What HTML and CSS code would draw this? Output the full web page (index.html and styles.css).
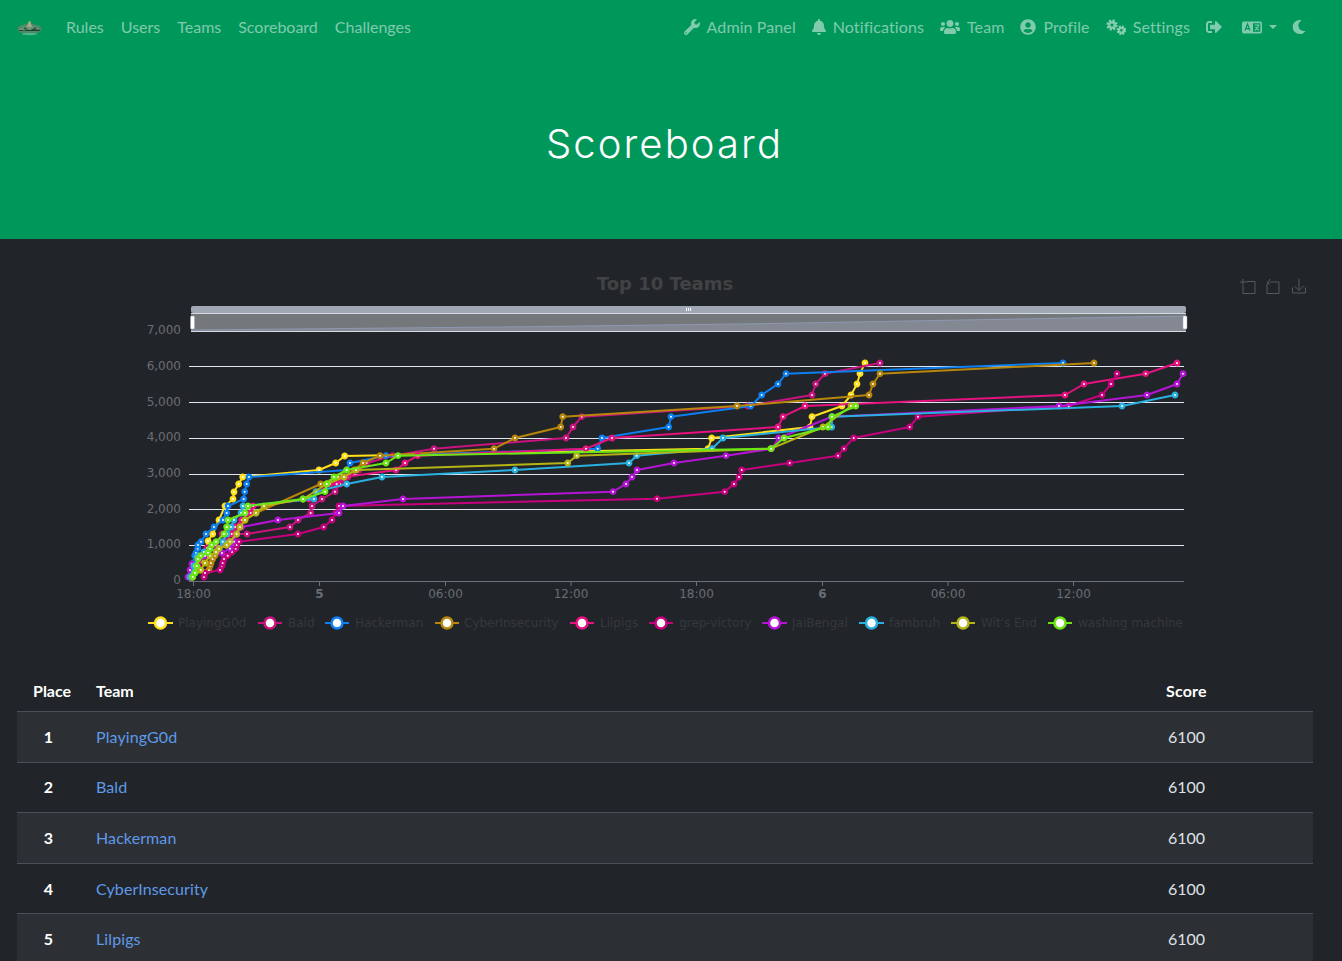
FILE: index.html
```html
<!DOCTYPE html>
<html lang="en">
<head>
<meta charset="utf-8">
<title>Scoreboard</title>
<link rel="stylesheet" href="styles.css">
</head>
<body>
<nav class="navbar">
  <a class="brand" href="#"><svg class="logo" viewBox="0 0 26 16"><ellipse cx="13" cy="9" rx="12.500" ry="5.500" fill="#4d8a68"/><path d="M2 9l6-2.500 5-2 5 2 6 2.500-2 2H4z" fill="#6d9577"/><path d="M2 10.500c3-1.500 5 1 7-.5s4 1 6-.5 5 1 9 0v1.500H2z" fill="#1f4434"/><path d="M12 1h2l1.500 6h-5z" fill="#a9a884"/><path d="M7 7.500h3v2H7zM17 7.500h3v2h-3z" fill="#2c5a45"/><ellipse cx="13" cy="14.300" rx="8" ry="1.200" fill="#4bb98b"/></svg></a>
  <ul class="nav-list">
    <li><a href="#">Rules</a></li>
    <li><a href="#">Users</a></li>
    <li><a href="#">Teams</a></li>
    <li><a href="#">Scoreboard</a></li>
    <li><a href="#">Challenges</a></li>
  </ul>
  <ul class="nav-list nav-right">
    <li><a href="#"><svg class="ico w16" viewBox="0 0 512 512"><path d="M507.73 109.1c-2.24-9.03-13.54-12.09-20.12-5.51l-74.36 74.36-67.88-11.31-11.31-67.88 74.36-74.36c6.62-6.62 3.43-17.9-5.66-20.16-47.38-11.74-99.55.91-136.58 37.93-39.64 39.64-50.55 97.1-34.05 147.2L18.74 402.76c-24.99 24.99-24.99 65.51 0 90.5 24.99 24.99 65.51 24.99 90.5 0l213.21-213.21c50.12 16.71 107.47 5.68 147.37-34.22 37.07-37.07 49.7-89.32 37.91-136.73zM64 472c-13.25 0-24-10.75-24-24 0-13.26 10.75-24 24-24s24 10.74 24 24c0 13.25-10.75 24-24 24z"/></svg>Admin Panel</a></li>
    <li><a href="#"><svg class="ico w14" viewBox="0 0 448 512"><path d="M224 512c35.32 0 63.97-28.65 63.97-64H160.03c0 35.35 28.65 64 63.97 64zm215.39-149.71c-19.32-20.76-55.47-51.99-55.47-154.29 0-77.7-54.48-139.9-127.94-155.16V32c0-17.67-14.32-32-31.98-32s-31.98 14.33-31.98 32v20.84C118.56 68.1 64.08 130.3 64.08 208c0 102.3-36.15 133.53-55.47 154.29-6 6.45-8.66 14.16-8.61 21.71.11 16.4 12.98 32 32.1 32h383.8c19.12 0 32-15.6 32.1-32 .05-7.55-2.61-15.27-8.61-21.71z"/></svg>Notifications</a></li>
    <li><a href="#"><svg class="ico w20" viewBox="0 0 640 512"><path d="M96 224c35.3 0 64-28.7 64-64s-28.7-64-64-64-64 28.7-64 64 28.7 64 64 64zm448 0c35.3 0 64-28.7 64-64s-28.7-64-64-64-64 28.7-64 64 28.7 64 64 64zm32 32h-64c-17.6 0-33.5 7.1-45.1 18.6 40.3 22.1 68.9 62 75.1 109.4h66c17.7 0 32-14.3 32-32v-32c0-35.3-28.7-64-64-64zm-256 0c61.9 0 112-50.1 112-112S381.9 32 320 32 208 82.1 208 144s50.1 112 112 112zm76.8 32h-8.3c-20.8 10-43.9 16-68.5 16s-47.6-6-68.5-16h-8.3C179.6 288 128 339.6 128 403.2V432c0 26.5 21.5 48 48 48h288c26.5 0 48-21.5 48-48v-28.8c0-63.6-51.6-115.2-115.2-115.2zm-223.7-13.4C161.5 263.1 145.6 256 128 256H64c-35.3 0-64 28.7-64 64v32c0 17.7 14.3 32 32 32h65.9c6.3-47.4 34.9-87.3 75.2-109.4z"/></svg>Team</a></li>
    <li><a href="#"><svg class="ico w16" viewBox="0 0 496 512"><path d="M248 8C111 8 0 119 0 256s111 248 248 248 248-111 248-248S385 8 248 8zm0 96c48.6 0 88 39.4 88 88s-39.4 88-88 88-88-39.4-88-88 39.4-88 88-88zm0 344c-58.7 0-111.3-26.6-146.5-68.2 18.8-35.4 55.6-59.8 98.5-59.8 2.4 0 4.8.4 7.1 1.1 13 4.2 26.6 6.9 40.9 6.9 14.3 0 28-2.7 40.9-6.9 2.3-.7 4.7-1.1 7.1-1.1 42.9 0 79.7 24.4 98.5 59.8C359.3 421.4 306.7 448 248 448z"/></svg>Profile</a></li>
    <li><a href="#"><svg class="ico w20" viewBox="0 0 20 16"><g class="gear"><circle cx="6" cy="6" r="2.8" stroke-width="2.4"/><circle cx="6" cy="6" r="4.7" stroke-width="2" stroke-dasharray="2.1 1.6"/><circle cx="15.4" cy="11.3" r="2.4" stroke-width="2.2"/><circle cx="15.4" cy="11.3" r="4" stroke-width="1.8" stroke-dasharray="1.9 1.25"/></g></svg>Settings</a></li>
    <li><a href="#"><svg class="ico w16 solo" viewBox="0 0 512 512"><path d="M497 273L329 441c-15 15-41 4.5-41-17v-96H152c-13.3 0-24-10.7-24-24v-96c0-13.3 10.7-24 24-24h136V88c0-21.4 25.9-32 41-17l168 168c9.3 9.4 9.3 24.6 0 34zM192 436v-40c0-6.6-5.4-12-12-12H96c-17.7 0-32-14.3-32-32V160c0-17.7 14.3-32 32-32h84c6.6 0 12-5.4 12-12V76c0-6.6-5.4-12-12-12H96c-53 0-96 43-96 96v192c0 53 43 96 96 96h84c6.6 0 12-5.4 12-12z"/></svg></a></li>
    <li class="lang"><a href="#"><svg class="ico w20 solo" viewBox="0 0 20 16"><path fill-rule="evenodd" d="M2 2.500h16a2 2 0 0 1 2 2v8a2 2 0 0 1-2 2H2a2 2 0 0 1-2-2v-8a2 2 0 0 1 2-2zM11 4.200v8.600h7.400V4.200z"/><path class="cut" d="M3 11.500l2.500-6.500 2.500 6.500M3.900 9.600h3.200"/><path class="glyph" d="M12.800 6h4.400M16.600 6c-.4 2.400-2 4.300-3.800 5.200M13.600 8c.7 1.400 2 2.600 3.600 3.200"/></svg><span class="caret"></span></a></li>
    <li><a href="#"><svg class="ico w14 solo" viewBox="0 0 512 512"><path d="M283.211 512c78.962 0 151.079-35.925 198.857-94.792 7.068-8.708-.639-21.43-11.562-19.35-124.203 23.654-238.262-71.576-238.262-196.954 0-72.222 38.662-138.635 101.498-174.394 9.686-5.512 7.25-20.197-3.756-22.23A258.156 258.156 0 0 0 283.211 0c-141.309 0-256 114.511-256 256 0 141.309 114.511 256 256 256z"/></svg></a></li>
  </ul>
</nav>
<header class="hero"><h1>Scoreboard</h1></header>
<main>
<svg class="chart" viewBox="0 239 1342 428" role="img">
  <defs>
    <marker id="m1" class="mk" markerWidth="8" markerHeight="8" refX="4" refY="4" markerUnits="userSpaceOnUse"><circle class="d1" cx="4" cy="4" r="2.2"/></marker>
    <marker id="m2" class="mk" markerWidth="8" markerHeight="8" refX="4" refY="4" markerUnits="userSpaceOnUse"><circle class="d2" cx="4" cy="4" r="2.2"/></marker>
    <marker id="m3" class="mk" markerWidth="8" markerHeight="8" refX="4" refY="4" markerUnits="userSpaceOnUse"><circle class="d3" cx="4" cy="4" r="2.2"/></marker>
    <marker id="m4" class="mk" markerWidth="8" markerHeight="8" refX="4" refY="4" markerUnits="userSpaceOnUse"><circle class="d4" cx="4" cy="4" r="2.2"/></marker>
    <marker id="m5" class="mk" markerWidth="8" markerHeight="8" refX="4" refY="4" markerUnits="userSpaceOnUse"><circle class="d5" cx="4" cy="4" r="2.2"/></marker>
    <marker id="m6" class="mk" markerWidth="8" markerHeight="8" refX="4" refY="4" markerUnits="userSpaceOnUse"><circle class="d6" cx="4" cy="4" r="2.2"/></marker>
    <marker id="m7" class="mk" markerWidth="8" markerHeight="8" refX="4" refY="4" markerUnits="userSpaceOnUse"><circle class="d7" cx="4" cy="4" r="2.2"/></marker>
    <marker id="m8" class="mk" markerWidth="8" markerHeight="8" refX="4" refY="4" markerUnits="userSpaceOnUse"><circle class="d8" cx="4" cy="4" r="2.2"/></marker>
    <marker id="m9" class="mk" markerWidth="8" markerHeight="8" refX="4" refY="4" markerUnits="userSpaceOnUse"><circle class="d9" cx="4" cy="4" r="2.2"/></marker>
    <marker id="m10" class="mk" markerWidth="8" markerHeight="8" refX="4" refY="4" markerUnits="userSpaceOnUse"><circle class="d10" cx="4" cy="4" r="2.2"/></marker>
  </defs>

  <text class="title" x="665" y="290" text-anchor="middle">Top 10 Teams</text>

  <g class="toolbox">
    <path d="M1243 285.500v8h12v-12h-8M1240 282h7M1243 279v6"/>
    <path d="M1270 282h9v11.500h-12v-9.500M1267 284.500l3-5.500M1267 282l3 2.500"/>
    <path d="M1292.500 287.500v5.500h13v-5.500M1299 278.500v12M1294.500 286l4.500 4.500 4.500-4.500"/>
  </g>

  <g class="grid">
    <path d="M189 366.500H1184M189 402.500H1184M189 438.500H1184M189 474.500H1184M189 509.500H1184M189 545.500H1184"/>
  </g>
  <path class="axis" d="M189 581.500H1184M193.500 581v5M319.500 581v5M445.500 581v5M571 581v5M696.500 581v5M822.500 581v5M948 581v5M1073.500 581v5"/>

  <g class="ylab" text-anchor="end">
    <text x="181" y="334">7,000</text>
    <text x="181" y="370">6,000</text>
    <text x="181" y="406">5,000</text>
    <text x="181" y="441">4,000</text>
    <text x="181" y="477">3,000</text>
    <text x="181" y="513">2,000</text>
    <text x="181" y="548">1,000</text>
    <text x="181" y="584">0</text>
  </g>
  <g class="xlab" text-anchor="middle">
    <text x="193.500" y="598">18:00</text>
    <text class="bold" x="319.500" y="598">5</text>
    <text x="445.500" y="598">06:00</text>
    <text x="571" y="598">12:00</text>
    <text x="696.500" y="598">18:00</text>
    <text class="bold" x="822.500" y="598">6</text>
    <text x="948" y="598">06:00</text>
    <text x="1073.500" y="598">12:00</text>
  </g>

  <g class="series">
    <polyline class="s1" points="192,577 196,570 200,560 205,552 208,541 212.700,534 219,520 225,506 233,499 234,492 238.700,484 242.700,477 319,470 335.700,463 344.700,456 708,448.700 711.700,438 810,427 812,416.700 842,406 851,395 857,384 860,373.700 865,363"/>
    <polyline class="s2" points="190,577 193,565 198,556 207,548 216,545 222,534 247,534 290,527 298,520 310.700,513 312,506 322,499 335,491.700 340,484 348,477 359,470 366.700,463 393,455.700 434,448.700 566,438 573,427 581.700,416.700 747.700,406 812,395 815.700,384 825,373.700 880,363"/>
    <polyline class="s3" points="192,577 193.300,563 194.700,555.700 196,553 197.700,548.700 198,545 201,541.700 206,534 214,527 223,520 226.700,513 228,506 243.700,499 244.700,491.700 246.700,484 249,477 346.700,470 350,463 386,455.700 597.700,448.700 602,438 668.700,427 671,416.700 750.700,406 761.700,395 778,384 786,373.700 1063,363"/>
    <polyline class="s4" points="190,577 200,570 209,570 210,566 211,563 212.700,559 215,555.700 219,548.700 226,545 230,541.700 236.700,534 240,527 245,520 256,513 320.700,484 338,477 344,477 354,470 363,463 380,455.700 494,448.700 515,438 560.700,427 562.700,416.700 737,406 869,395 873,384 880,373.700 1094,363"/>
    <polyline class="s5" points="192,577 198,566 206,552 218,548.700 226,541.700 231.700,534 235,527 241.700,520 250.700,513 253,506 309,499 330,484 336.700,484 344.700,477 396,470 405,463 417.700,455.700 586,448.700 612,438 778,427 783,416.700 805,406 1065,395 1084,384 1145.700,373.700 1177,363"/>
    <polyline class="s6" points="204,577 205,573 220,570 222,566 222.700,563 224,559 227.700,555.700 232,552 235.700,548.700 236.700,545 239,541.700 298,534 323.700,527 332,520 336,513 339,506 657,498.700 724.700,491.700 734,484 739,477 741.700,470 789.700,463 838,455.700 844,448.700 853.700,438 909.700,427 918,416.700 1068.700,406 1102,395 1111,384 1117,373.700"/>
    <polyline class="s7" points="188,577 190,570 192,564 205,556 222,553 230,548.700 234,541.700 237,534 241.700,527 278,520 339,513 343,506 403,499 613,491.700 626,484 632,477 637,470 674,463 726,455.700 771.700,448.700 778.700,438 832,416.700 1059,406 1147,395 1177,384 1183,373.700"/>
    <polyline class="s8" points="190,577 194,566 198,556 204,552 219,548.700 222.700,541.700 227,534 231,527 234,520 241,513 243,506 314,499 316,491.700 346.700,484 382,477 515,470 629,463 636.700,455.700 712,448.700 723,438 831.700,427 832,416.700 1122,406 1175,395"/>
    <polyline class="s9" points="192.700,577 200.700,570 205,563 210,555.700 216,552 219,548.700 226.700,545 230,541.700 236.700,534 240,527 245,520 256,513 264,506 303,499 326.700,484 344,477 356,470 567.700,463 576.700,455.700 771,448.700 823,427 851,406"/>
    <polyline class="s10" points="192.700,577 195,573 196.700,566 198,559 200.700,555.700 208,552.700 210,548.700 211.700,545 216,541.700 224,534 226.700,527 228,520 245,513 248,506 303,499 325,491.700 326.700,484 334,477 346.700,470 386,463 398,455.700 771,448.700 784,438 828,427 832,416.700 855.700,406"/>
  </g>

  <g class="zoom">
    <rect class="z-band" x="191" y="306" width="995" height="7" rx="2"/>
    <rect class="z-fill" x="191" y="313" width="995" height="18"/>
    <path class="z-shadow" d="M191 331V330L530 326.700L760 323.700L1186 316V331Z"/>
    <path class="z-line" d="M191 330L530 326.700L760 323.700L1186 316"/>
    <path class="z-border" d="M191 313.500H1186M191 331.500H1186"/>
    <path class="z-grip" d="M686.500 308v3M688.500 308v3M690.500 308v3"/>
    <rect class="z-handle" x="190.500" y="316" width="4" height="13" rx="1"/>
    <rect class="z-handle" x="1183" y="316" width="4" height="13" rx="1"/>
  </g>

  <g class="legend">
    <path class="s1 lg" d="M148 623h25"/><circle class="lc s1" cx="160.500" cy="623" r="5.500"/><text x="178" y="627">PlayingG0d</text>
    <path class="s2 lg" d="M258 623h24"/><circle class="lc s2" cx="270" cy="623" r="5.500"/><text x="288" y="627">Bald</text>
    <path class="s3 lg" d="M325 623h24"/><circle class="lc s3" cx="337" cy="623" r="5.500"/><text x="355" y="627">Hackerman</text>
    <path class="s4 lg" d="M435 623h24"/><circle class="lc s4" cx="447" cy="623" r="5.500"/><text x="464" y="627">CyberInsecurity</text>
    <path class="s5 lg" d="M570 623h24"/><circle class="lc s5" cx="582" cy="623" r="5.500"/><text x="600" y="627">Lilpigs</text>
    <path class="s6 lg" d="M649 623h24"/><circle class="lc s6" cx="661" cy="623" r="5.500"/><text x="679" y="627">grep-victory</text>
    <path class="s7 lg" d="M762 623h25"/><circle class="lc s7" cx="774.500" cy="623" r="5.500"/><text x="792" y="627">JaiBengal</text>
    <path class="s8 lg" d="M859 623h25"/><circle class="lc s8" cx="871.500" cy="623" r="5.500"/><text x="889" y="627">fambruh</text>
    <path class="s9 lg" d="M951 623h24"/><circle class="lc s9" cx="963" cy="623" r="5.500"/><text x="981" y="627">Wit's End</text>
    <path class="s10 lg" d="M1048 623h24"/><circle class="lc s10" cx="1060" cy="623" r="5.500"/><text x="1078" y="627">washing machine</text>
  </g>
</svg>

<table class="board">
  <thead>
    <tr><th class="c-place">Place</th><th class="c-team">Team</th><th class="c-score">Score</th></tr>
  </thead>
  <tbody>
    <tr><th class="r-place">1</th><td><a href="#">PlayingG0d</a></td><td class="c-score">6100</td></tr>
    <tr><th class="r-place">2</th><td><a href="#">Bald</a></td><td class="c-score">6100</td></tr>
    <tr><th class="r-place">3</th><td><a href="#">Hackerman</a></td><td class="c-score">6100</td></tr>
    <tr><th class="r-place">4</th><td><a href="#">CyberInsecurity</a></td><td class="c-score">6100</td></tr>
    <tr><th class="r-place">5</th><td><a href="#">Lilpigs</a></td><td class="c-score">6100</td></tr>
  </tbody>
</table>
</main>
</body>
</html>
```
FILE: styles.css
```css
html, body { height: 961px; overflow: hidden; }
body {
  margin: 0;
  background: #212529;
  color: #dee2e6;
  font-family: Lato, "Liberation Sans", sans-serif;
  font-size: 16px;
  line-height: 24px;
}
a { text-decoration: none; }

.navbar {
  display: flex;
  align-items: center;
  box-sizing: border-box;
  height: 56px;
  padding: 0 28px 2px 17px;
  background: #00975b;
}
.brand { display: flex; margin-right: 16px; }
.logo { width: 25px; height: 16px; display: block; margin-top: 2px; }
.nav-list {
  display: flex;
  list-style: none;
  margin: 0;
  padding: 0;
  gap: 1px;
}
.nav-list a {
  display: flex;
  align-items: center;
  height: 24px;
  padding: 0 8px;
  color: rgba(255, 255, 255, .5);
}
.nav-right { margin-left: auto; gap: 0; letter-spacing: .1px; }
.lang { margin: 0 -1px 0 4px; }
.ico { height: 16px; fill: rgba(255, 255, 255, .5); margin-right: 7px; flex: none; }
.ico.solo { margin-right: 0; }
.w14 { width: 14px; }
.w16 { width: 16px; }
.w20 { width: 20px; }
.gear circle { fill: none; stroke: rgba(255, 255, 255, .5); }
.cut { fill: none; stroke: #00975b; stroke-width: 1.2; }
.glyph { fill: none; stroke: rgba(255, 255, 255, .5); stroke-width: 1.1; }
.caret {
  width: 0;
  height: 0;
  margin-left: 7px;
  border-top: 4.800px solid rgba(255, 255, 255, .5);
  border-left: 4.800px solid transparent;
  border-right: 4.800px solid transparent;
}

.hero {
  display: flex;
  align-items: center;
  justify-content: center;
  box-sizing: border-box;
  height: 183px;
  padding: 0 13px 8px 0;
  background: #00975b;
  color: #fff;
}
.hero h1 {
  margin: 0;
  font-family: Inter, sans-serif;
  font-size: 40px;
  line-height: 48px;
  font-weight: 300;
  letter-spacing: 2.100px;
}

.chart { display: block; width: 1342px; height: 428px; font-family: "DejaVu Sans", sans-serif; font-size: 12px; }
.title { font-size: 18px; font-weight: 700; fill: #414244; }
.toolbox path { fill: none; stroke: #56595d; stroke-width: 1; }
.grid path { fill: none; stroke: #e0e6f1; stroke-width: 1; }
.axis { fill: none; stroke: #6e7079; stroke-width: 1; }
.ylab text, .xlab text { fill: #6a6d74; }
.xlab .bold { font-weight: 700; }
.legend text { fill: #36383c; }

.series polyline { fill: none; stroke-width: 2; stroke-linejoin: round; }
.d1, .d2, .d3, .d4, .d5, .d6, .d7, .d8, .d9, .d10 { fill: #fff; stroke-width: 2.400; }
.d1 { stroke: #ffe01b; } .d2 { stroke: #c9137f; } .d3 { stroke: #0d7ff0; } .d4 { stroke: #b8860b; } .d5 { stroke: #e6127f; }
.d6 { stroke: #c7007d; } .d7 { stroke: #b514d6; } .d8 { stroke: #29b0e0; } .d9 { stroke: #b5b514; } .d10 { stroke: #6ce614; }
.s1 { stroke: #ffe01b; marker: url(#m1); }
.s2 { stroke: #c9137f; marker: url(#m2); }
.s3 { stroke: #0d7ff0; marker: url(#m3); }
.s4 { stroke: #b8860b; marker: url(#m4); }
.s5 { stroke: #e6127f; marker: url(#m5); }
.s6 { stroke: #c7007d; marker: url(#m6); }
.s7 { stroke: #b514d6; marker: url(#m7); }
.s8 { stroke: #29b0e0; marker: url(#m8); }
.s9 { stroke: #b5b514; marker: url(#m9); }
.s10 { stroke: #6ce614; marker: url(#m10); }
.lg { fill: none; stroke-width: 2; marker: none; }
.lc { fill: #fff; stroke-width: 2.500; marker: none; }

.z-band { fill: #a0a6b3; }
.z-fill { fill: #75787b; }
.z-shadow { fill: #838892; }
.z-line { fill: none; stroke: #8e98b3; stroke-width: 1; }
.z-border { fill: none; stroke: #d5d9e2; stroke-width: 1; }
.z-grip { fill: none; stroke: #fff; stroke-width: 1; }
.z-handle { fill: #fff; stroke: #a0a6b3; stroke-width: .5; }

.board {
  width: 1296px;
  margin-left: 17px;
  border-collapse: separate;
  border-spacing: 0;
}
.board th, .board td { padding: 12.800px 12px; border-bottom: 1px solid #495057; text-align: left; font-weight: 400; }
.board thead th { padding: 12px 12px 8px; font-weight: 700; color: #fff; }
.board thead .c-place { width: 39px; padding-left: 16px; }
.board tbody .r-place { padding-right: 16px; text-align: center; font-weight: 700; color: #fff; }
.board .c-score { width: 41px; padding-right: 106px; text-align: center; }
.board thead .c-score { text-align: left; letter-spacing: .2px; }
.board tbody tr:nth-child(odd) > * { background: #2c3034; }
.board td a { color: #5f99e8; letter-spacing: .1px; }
```
